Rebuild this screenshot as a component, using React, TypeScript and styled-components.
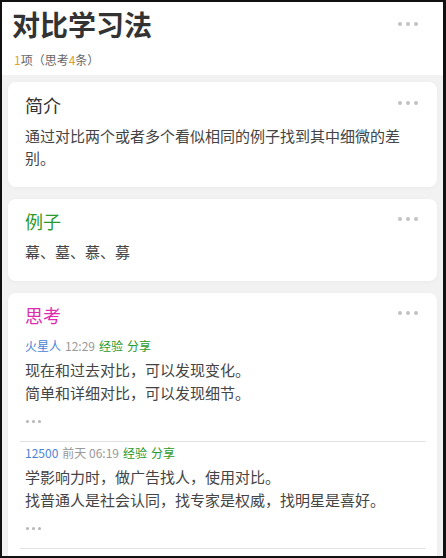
import React from "react";
import styled, { createGlobalStyle } from "styled-components";

const Global = createGlobalStyle`
  html, body { margin: 0; padding: 0; background: #ffffff; }
  body {
    font-family: "Noto Sans CJK SC", "Noto Sans", sans-serif;
    width: 446px;
    height: 558px;
    overflow: hidden;
  }
  * { box-sizing: border-box; }
`;

const Frame = styled.div`
  width: 446px;
  height: 558px;
  border: 2px solid #111;
  border-right-width: 3px;
  background: #f2f2f2;
  overflow: hidden;
  display: flex;
  flex-direction: column;
`;

const Header = styled.header`
  background: #ffffff;
  padding: 4px 25px 6px 10px;
  display: flex;
  flex-direction: column;
`;

const HeaderTop = styled.div`
  display: flex;
  justify-content: space-between;
  align-items: center;
`;

const Title = styled.h1`
  margin: 0;
  font-size: 28px;
  line-height: 36px;
  font-weight: 700;
  color: #333;
`;

const Sub = styled.div`
  margin-top: 9px;
  padding-left: 2px;
  font-size: 12px;
  line-height: 18px;
  color: #666;
`;

const Num = styled.span`
  color: #e0a030;
`;

const Dots = styled.div<{ $size?: number; $gap?: number; $color?: string }>`
  display: flex;
  gap: ${(p) => p.$gap ?? 4}px;
  align-items: center;
  span {
    width: ${(p) => p.$size ?? 4}px;
    height: ${(p) => p.$size ?? 4}px;
    border-radius: 50%;
    background: ${(p) => p.$color ?? "#c2c2c2"};
  }
`;

const More = ({ size, gap, color }: { size?: number; gap?: number; color?: string }) => (
  <Dots $size={size} $gap={gap} $color={color}>
    <span />
    <span />
    <span />
  </Dots>
);

const List = styled.main`
  display: flex;
  flex-direction: column;
  gap: 11.5px;
  padding: 7px 6px 0 6px;
`;

const Card = styled.section`
  background: #ffffff;
  border-radius: 8px;
  box-shadow: 0 1px 4px rgba(0, 0, 0, 0.035);
  padding: 10.5px 0 17.5px 0;
`;

const CardHead = styled.div`
  display: flex;
  justify-content: space-between;
  align-items: center;
  padding: 0 19px 0 17px;
`;

const CardTitle = styled.h2<{ $color: string }>`
  margin: 0;
  font-size: 18px;
  line-height: 24px;
  font-weight: 400;
  color: ${(p) => p.$color};
`;

const HeadDots = styled.div`
  margin-top: -4px;
`;

const Body = styled.p`
  margin: 8px 0 0 0;
  padding: 0 30px 0 17px;
  font-size: 15px;
  line-height: 22.5px;
  color: #444;
`;

const Comments = styled.div`
  margin: 8px 11px 0 12px;
`;

const Comment = styled.div`
  padding: 2px 5px 12px 5px;
  border-bottom: 1px solid #e2e2e2;
`;

const Meta = styled.div`
  font-size: 12px;
  line-height: 18px;
  display: flex;
  gap: 4px;
`;

const Author = styled.span`
  color: #4a84d4;
`;
const Time = styled.span`
  color: #999;
`;
const Tag = styled.span`
  color: #2a9a2a;
`;

const CommentText = styled.div`
  margin-top: 4px;
  font-size: 15px;
  line-height: 22.5px;
  color: #444;
`;

const CommentDots = styled.div`
  margin-top: 9px;
  height: 16px;
  display: flex;
  align-items: center;
  padding-left: 1px;
`;

const comments = [
  {
    author: "火星人",
    time: "12:29",
    lines: ["现在和过去对比，可以发现变化。", "简单和详细对比，可以发现细节。"],
  },
  {
    author: "12500",
    time: "前天 06:19",
    lines: ["学影响力时，做广告找人，使用对比。", "找普通人是社会认同，找专家是权威，找明星是喜好。"],
  },
];

export default function App() {
  return (
    <>
      <Global />
      <Frame>
        <Header>
          <HeaderTop>
            <Title>对比学习法</Title>
            <More />
          </HeaderTop>
          <Sub>
            <Num>1</Num>项（思考<Num>4</Num>条）
          </Sub>
        </Header>
        <List>
          <Card>
            <CardHead>
              <CardTitle $color="#333">简介</CardTitle>
              <HeadDots>
                <More />
              </HeadDots>
            </CardHead>
            <Body>通过对比两个或者多个看似相同的例子找到其中细微的差别。</Body>
          </Card>
          <Card>
            <CardHead>
              <CardTitle $color="#2a9a2a">例子</CardTitle>
              <HeadDots>
                <More />
              </HeadDots>
            </CardHead>
            <Body>幕、墓、慕、募</Body>
          </Card>
          <Card>
            <CardHead>
              <CardTitle $color="#e02ab0">思考</CardTitle>
              <HeadDots>
                <More />
              </HeadDots>
            </CardHead>
            <Comments>
              {comments.map((c, i) => (
                <Comment key={i}>
                  <Meta>
                    <Author>{c.author}</Author>
                    <Time>{c.time}</Time>
                    <Tag>经验</Tag>
                    <Tag>分享</Tag>
                  </Meta>
                  <CommentText>
                    {c.lines.map((l, j) => (
                      <div key={j}>{l}</div>
                    ))}
                  </CommentText>
                  <CommentDots>
                    <More size={3} gap={3} color="#b5b5b5" />
                  </CommentDots>
                </Comment>
              ))}
            </Comments>
          </Card>
        </List>
      </Frame>
    </>
  );
}
